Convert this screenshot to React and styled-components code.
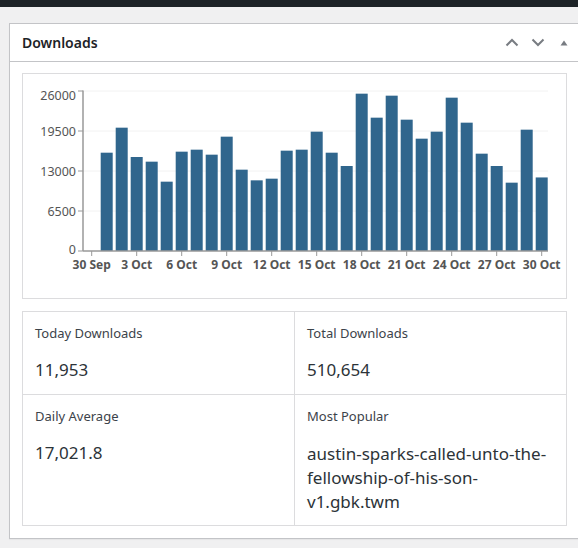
import React from 'react';
import styled, { createGlobalStyle } from 'styled-components';

const GlobalStyle = createGlobalStyle`
  html, body {
    margin: 0;
    padding: 0;
    background: #f0f0f1;
    overflow: hidden;
  }
  body {
    font-family: "Noto Sans", "Open Sans", sans-serif;
    color: #1d2327;
  }
`;

const TopBar = styled.div`
  height: 7px;
  background: #1d2327;
`;

const Page = styled.div`
  padding: 16px 0 0 9px;
  height: 541px;
  box-sizing: border-box;
`;

const Panel = styled.div`
  width: 571px;
  box-sizing: border-box;
  background: #fff;
  border: 1px solid #c3c4c7;
  box-shadow: 0 1px 1px rgba(0, 0, 0, 0.04);
`;

const Header = styled.div`
  display: flex;
  align-items: center;
  justify-content: space-between;
  height: 37px;
  border-bottom: 1px solid #c3c4c7;
  padding-left: 12px;
`;

const Title = styled.h2`
  margin: 0;
  font-size: 14px;
  font-weight: 600;
  line-height: 1;
  color: #1d2327;
`;

const Handles = styled.div`
  display: flex;
  align-items: center;
  padding-right: 2px;
`;

const HandleBtn = styled.button`
  width: 26px;
  height: 36px;
  padding: 0;
  border: 0;
  background: none;
  display: flex;
  align-items: center;
  justify-content: center;
  color: #787c82;
`;

const Inside = styled.div`
  padding: 11px 12px 12px;
  display: flex;
  flex-direction: column;
  gap: 12px;
`;

const ChartBox = styled.div`
  border: 1px solid #dcdcde;
  height: 226px;
  box-sizing: border-box;
  svg {
    display: block;
  }
`;

const StatsGrid = styled.div`
  display: grid;
  grid-template-columns: 272px 1fr;
  grid-template-rows: 83px 131px;
  border: 1px solid #dcdcde;
  border-bottom: 0;
  border-right: 0;
`;

const Cell = styled.div`
  border-right: 1px solid #dcdcde;
  border-bottom: 1px solid #dcdcde;
  padding: 13px 12px 0;
`;

const Label = styled.div`
  font-size: 13px;
  line-height: 17px;
  color: #3c434a;
`;

const Value = styled.div`
  margin-top: ${(p) => (p.$long ? '17px' : '16px')};
  font-size: 17px;
  line-height: 24px;
  color: #2c3338;
`;

const data = [
  15975, 20040, 15275, 14516, 11266, 16141, 16466, 15654, 18579, 13216,
  11483, 11754, 16304, 16466, 19391, 15975, 13812, 25566, 21666, 25241,
  21341, 18254, 19391, 24916, 20854, 15816, 13812, 11104, 19716, 11953,
];

const yTicks = [0, 6500, 13000, 19500, 26000];
const xLabels = ['30 Sep', '3 Oct', '6 Oct', '9 Oct', '12 Oct', '15 Oct', '18 Oct', '21 Oct', '24 Oct', '27 Oct', '30 Oct'];

const AX = 60;
const Y0 = 177;
const PH = 160;
const X0 = 68.7;
const STEP = 15;
const RIGHT = 525;

const yPos = (v) => Y0 - (v / 26000) * PH;

// nudge for the y labels: the top one sits below its tick, the bottom one a bit up
const labelShift = (t) => (t === 26000 ? 9 : t === 0 ? 3 : 4.5);

function Chart() {
  return (
    <svg width="543" height="224" viewBox="0 0 543 224">
      {yTicks.map((t) => (
        <g key={t}>
          {t > 0 && <line x1={AX} x2={RIGHT} y1={yPos(t)} y2={yPos(t)} stroke="#f2f2f2" strokeWidth="1" />}
          <line x1={AX - 5} x2={AX} y1={yPos(t)} y2={yPos(t)} stroke="#999" strokeWidth="1" />
          <text x={AX - 7} y={yPos(t) + labelShift(t)} textAnchor="end" fontSize="12.5" fill="#555" fontFamily="Noto Sans, sans-serif">
            {t}
          </text>
        </g>
      ))}
      {data.map((v, i) => (
        <rect key={i} x={X0 + STEP * (i + 1) - 6} y={yPos(v)} width="12" height={Y0 - yPos(v)} fill="#30668d" />
      ))}
      <line x1={AX} x2={AX} y1={yPos(26000) - 0.5} y2={Y0} stroke="#999" strokeWidth="1.5" />
      <line x1={AX} x2={RIGHT} y1={Y0} y2={Y0} stroke="#999" strokeWidth="1.5" />
      {xLabels.map((l, i) => {
        const x = X0 + i * 3 * STEP;
        return (
          <g key={l}>
            <line x1={x} x2={x} y1={Y0} y2={Y0 + 5} stroke="#999" strokeWidth="1" />
            <text x={x} y={Y0 + 17.5} textAnchor="middle" fontSize="12" fontWeight="700" fill="#555" fontFamily="Noto Sans, sans-serif">
              {l}
            </text>
          </g>
        );
      })}
    </svg>
  );
}

const ChevronUp = () => (
  <svg width="14" height="9" viewBox="0 0 14 9">
    <path d="M1.5 7.5 L7 2 L12.5 7.5" fill="none" stroke="currentColor" strokeWidth="2" />
  </svg>
);

const ChevronDown = () => (
  <svg width="14" height="9" viewBox="0 0 14 9">
    <path d="M1.5 1.5 L7 7 L12.5 1.5" fill="none" stroke="currentColor" strokeWidth="2" />
  </svg>
);

const TriangleUp = () => (
  <svg width="8" height="6" viewBox="0 0 8 6">
    <path d="M4 0.5 L7.5 5.5 L0.5 5.5 Z" fill="currentColor" />
  </svg>
);

export default function App() {
  return (
    <>
      <GlobalStyle />
      <TopBar />
      <Page>
        <Panel>
          <Header>
            <Title>Downloads</Title>
            <Handles>
              <HandleBtn><ChevronUp /></HandleBtn>
              <HandleBtn><ChevronDown /></HandleBtn>
              <HandleBtn><TriangleUp /></HandleBtn>
            </Handles>
          </Header>
          <Inside>
            <ChartBox>
              <Chart />
            </ChartBox>
            <StatsGrid>
              <Cell>
                <Label>Today Downloads</Label>
                <Value>11,953</Value>
              </Cell>
              <Cell>
                <Label>Total Downloads</Label>
                <Value>510,654</Value>
              </Cell>
              <Cell>
                <Label>Daily Average</Label>
                <Value>17,021.8</Value>
              </Cell>
              <Cell>
                <Label>Most Popular</Label>
                <Value $long>austin-sparks-called-unto-the-fellowship-of-his-son-v1.gbk.twm</Value>
              </Cell>
            </StatsGrid>
          </Inside>
        </Panel>
      </Page>
    </>
  );
}
